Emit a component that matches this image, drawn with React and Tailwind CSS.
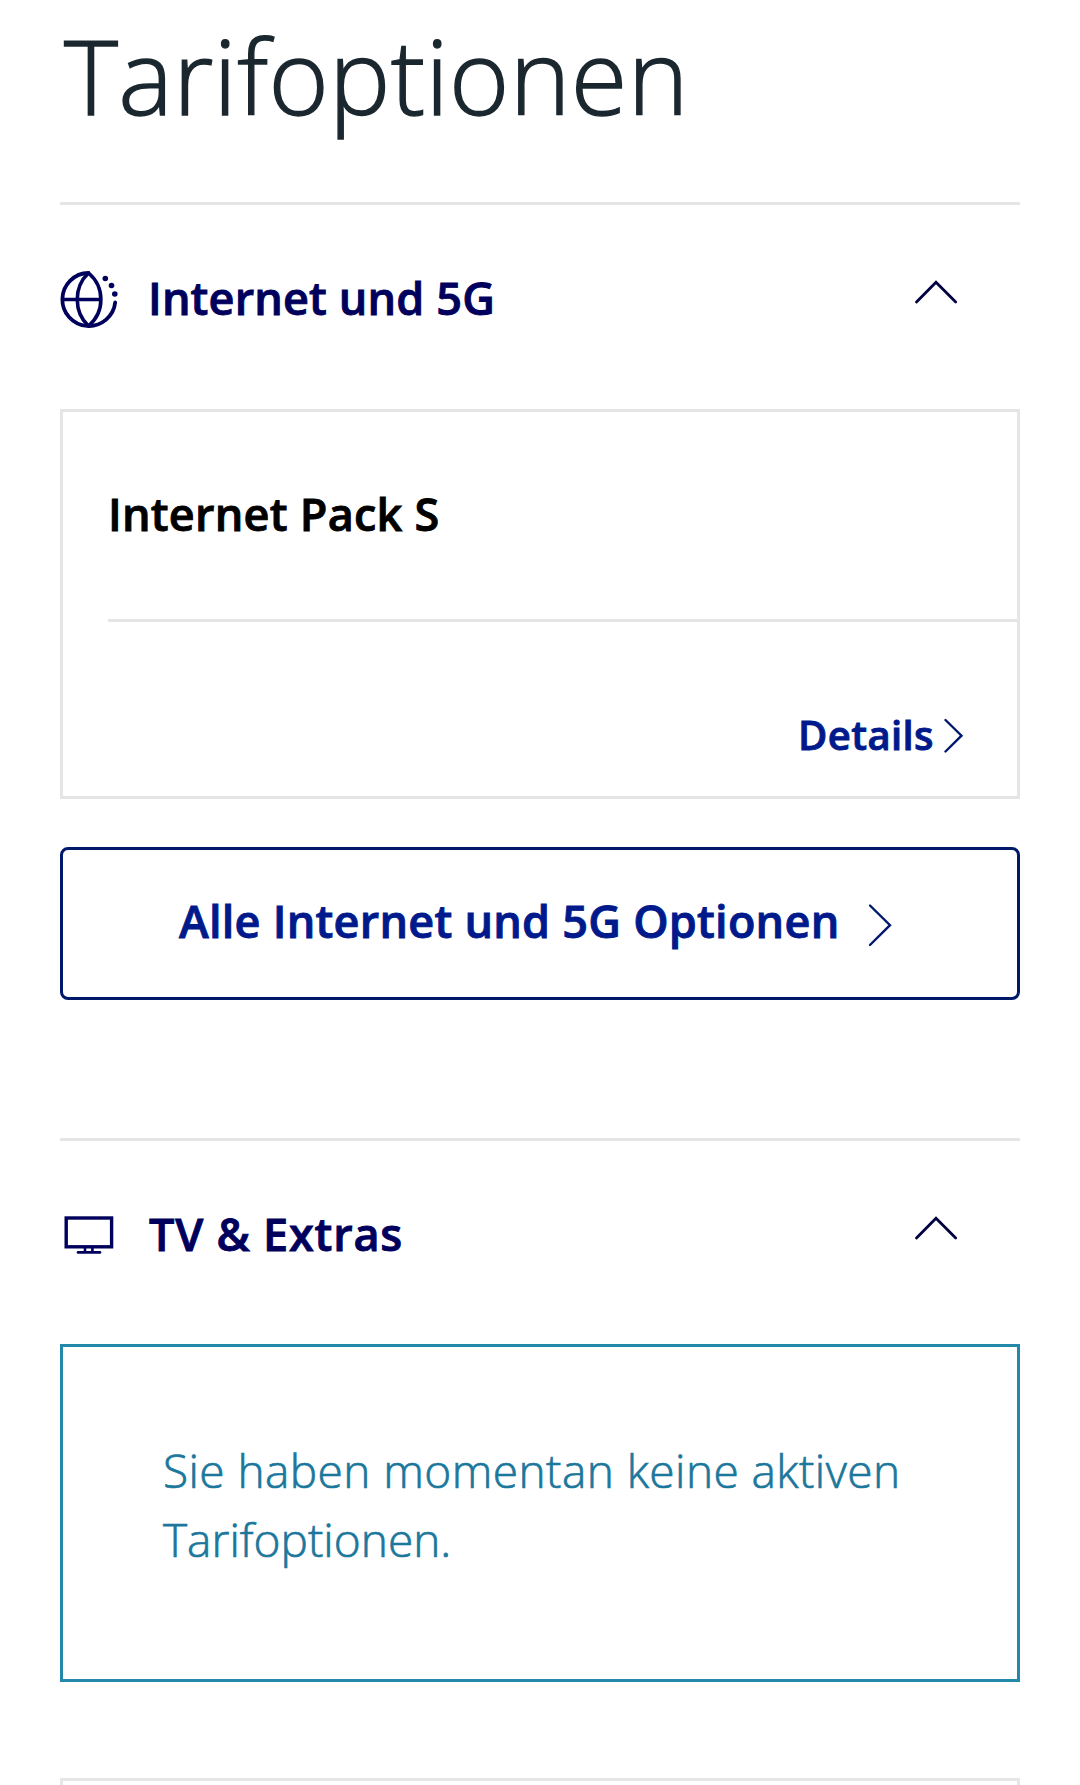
// Globe with a dotted upper right edge
function GlobeIcon() {
  return (
    <svg className="overflow-visible" width="60" height="60" viewBox="0 0 60 60" fill="none" stroke="#00005c" strokeWidth="3.8" strokeLinecap="round">
      <path d="M28.5 6A26.5 26.5 0 1 0 55.2 35.5" />
      <path d="M28.5 6C13.5 20 13.5 45 28.5 59C45 45 45 20 28.5 6" strokeLinejoin="round" strokeWidth="3.6" />
      <path d="M3 32.5H40" strokeWidth="3.6" />
      <g fill="#00005c" stroke="none">
        <circle cx="45.3" cy="11.5" r="2.8" />
        <circle cx="51.5" cy="18.5" r="2.8" />
        <circle cx="54.8" cy="27" r="2.8" />
      </g>
    </svg>
  );
}

function TvIcon() {
  return (
    <svg width="60" height="60" viewBox="0 0 60 60" fill="none" stroke="#00005c">
      <rect x="6.2" y="15" width="45.4" height="28.8" strokeWidth="3.4" />
      <path d="M25 44.5V49M32.4 44.5V49" strokeWidth="2.6" />
      <path d="M18 49.4H40" strokeWidth="2.6" strokeLinecap="round" />
    </svg>
  );
}

function ChevronUp() {
  return (
    <svg width="48" height="48" viewBox="0 0 48 48" fill="none" stroke="#00003f" strokeWidth="2.8" strokeLinecap="round">
      <path d="M4.5 29L24 9.3L43.7 29" />
    </svg>
  );
}

function SectionHeader({ icon, children }) {
  return (
    <button className="flex h-[184px] w-full items-center pr-[60px] text-left">
      {icon}
      <span className="ml-7 flex-1 pt-0.5 text-[45px] leading-[60px] font-semibold text-[#00005c] [-webkit-text-stroke:0.9px]">
        {children}
      </span>
      <ChevronUp />
    </button>
  );
}

export default function App() {
  return (
    <main className="h-[1785px] overflow-hidden bg-white px-[60px] font-['Open_Sans',sans-serif]">
      <h1 className="mb-[53px] pt-px pl-1 text-[103px] leading-[148px] font-light tracking-[0.3px] text-[#1b272f] [-webkit-text-stroke:1.4px]">
        Tarifoptionen
      </h1>

      {/* Internet */}
      <section className="h-[936px] border-t-3 border-[#e4e6e6]">
        <SectionHeader icon={<GlobeIcon />}>
          <span className="tracking-[0.15px]">Internet und 5G</span>
        </SectionHeader>

        <div className="mt-5 h-[390px] border-3 border-[#e4e6e6] pl-[45px]">
          <div className="flex h-[210px] items-center border-b-3 border-[#e4e6e6] pb-[3px]">
            <h3 className="text-[45px] leading-[60px] font-semibold tracking-[0.25px] text-black [-webkit-text-stroke:0.9px]">
              Internet Pack S
            </h3>
          </div>
          <a className="flex justify-end pt-[83px] pr-[53px] text-[#001a8c]">
            <span className="text-[40px] leading-[60px] font-semibold tracking-[0.4px] [-webkit-text-stroke:0.9px]">
              Details
            </span>
            <svg className="-mt-px ml-2.5" width="20" height="60" viewBox="0 0 20 60" fill="none" stroke="#00196e" strokeWidth="2.4" strokeLinecap="round">
              <path d="M1.5 16L17.5 31.7L1.5 47.5" />
            </svg>
          </a>
        </div>

        <button className="mt-12 flex h-[153px] w-full items-center rounded-lg border-3 border-[#001a6b] pb-[5px] pl-[116px] text-[#001a8c]">
          <span className="text-[45px] leading-[60px] font-semibold tracking-[0.25px] whitespace-nowrap [-webkit-text-stroke:0.9px]">
            Alle Internet und 5G Optionen
          </span>
          <svg className="ml-[29px]" width="24" height="60" viewBox="0 0 24 60" fill="none" stroke="#00196e" strokeWidth="2.4" strokeLinecap="round">
            <path d="M2 14.5L22 34.2L2 54" />
          </svg>
        </button>
      </section>

      {/* TV */}
      <section className="border-t-3 border-[#e4e6e6]">
        <SectionHeader icon={<TvIcon />}>
          <span className="ml-px tracking-[0.8px]">TV & Extras</span>
        </SectionHeader>

        <div className="mt-[19px] h-[338px] border-3 border-[#2389a9] pt-[89px] pl-[100px] text-[46px] leading-[69px] font-light text-[#1b779c] [-webkit-text-stroke:0.7px]">
          <p className="whitespace-nowrap">
            <span className="tracking-[0.43px]">Sie haben momentan keine aktiven</span>
            <br />
            Tarifoptionen.
          </p>
        </div>
      </section>

      <div className="mt-24 h-20 border-3 border-[#e6e6e6]" />
    </main>
  );
}
